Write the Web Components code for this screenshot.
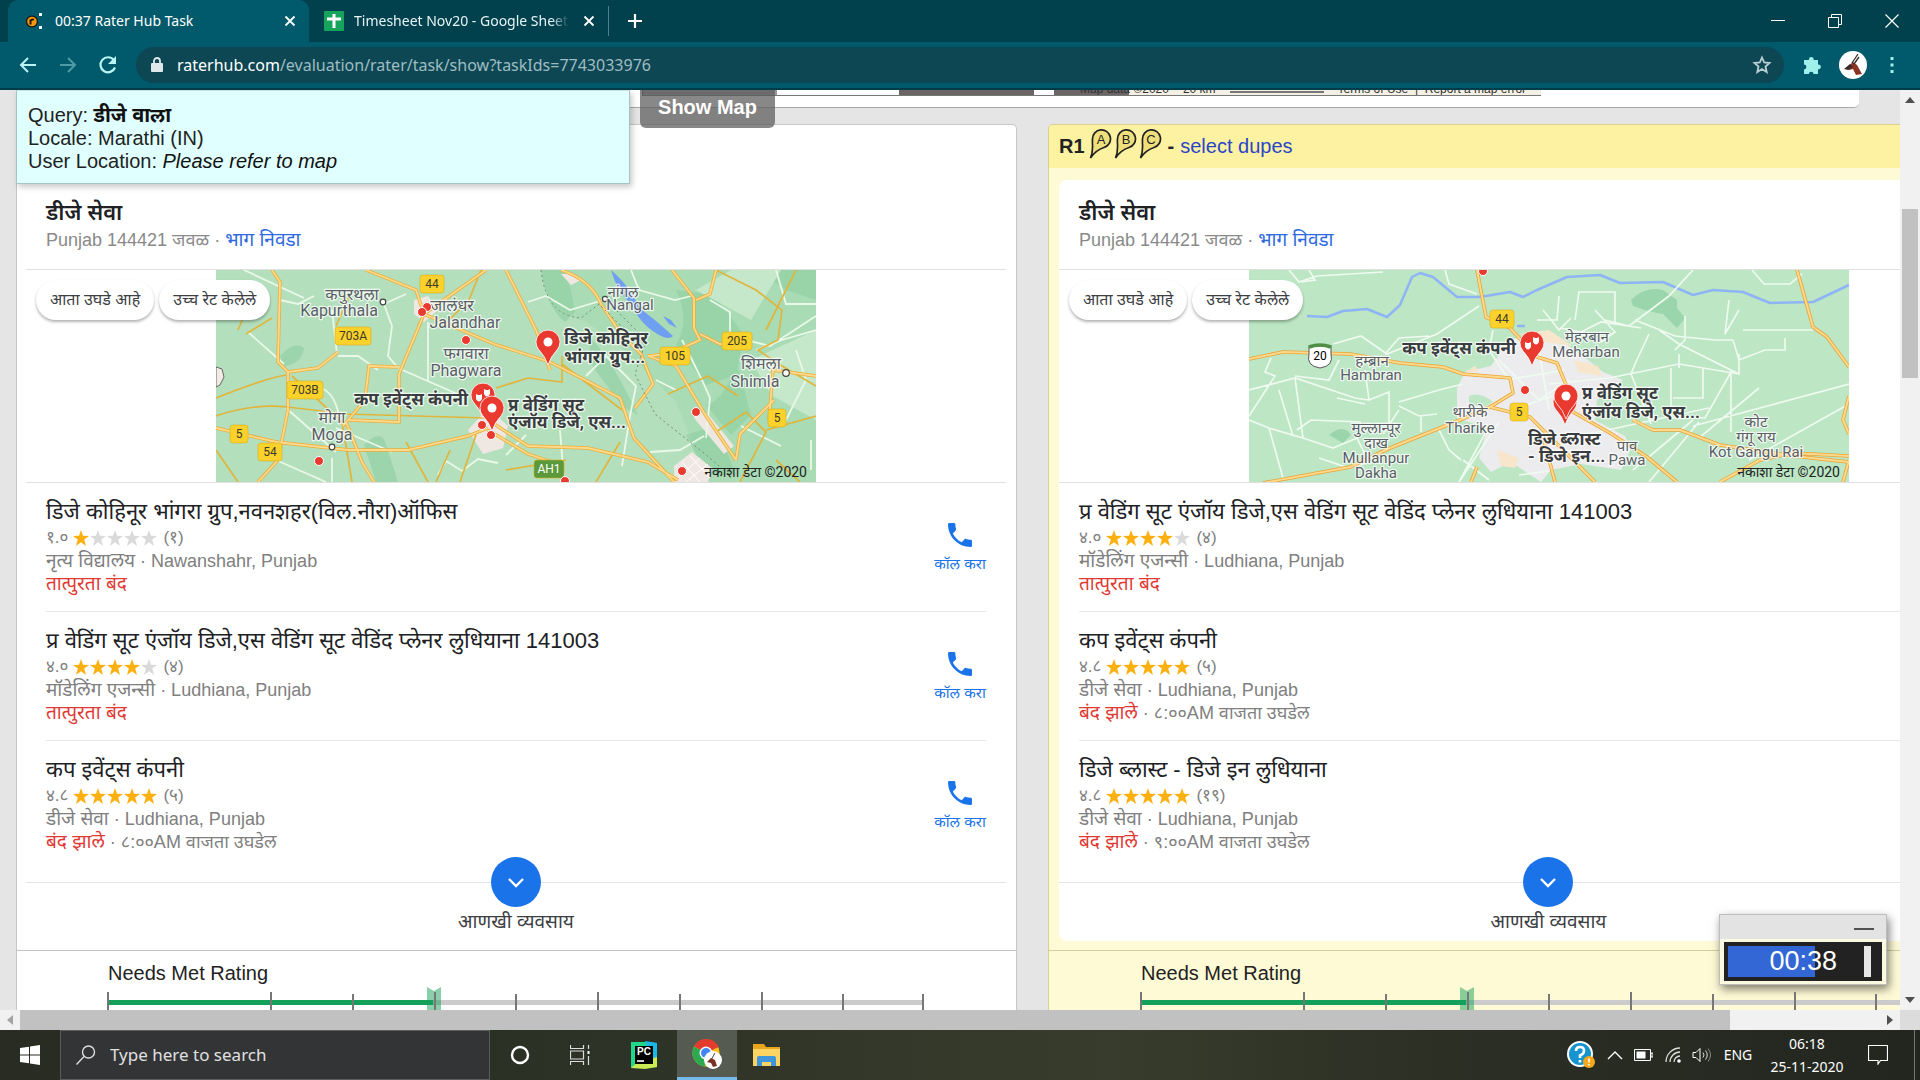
<!DOCTYPE html>
<html lang="mr">
<head>
<meta charset="utf-8">
<title>00:37 Rater Hub Task</title>
<style>
html, body { margin: 0; height: 100%; }
body { font-family: "Liberation Sans", "Noto Sans", "Noto Sans Devanagari", sans-serif; overflow: hidden; --ui: "Noto Sans", "Open Sans", sans-serif; }
</style>
</head>
<body>
<desktop-screen></desktop-screen>
<script>
const define = (name, render) => customElements.define(name, class extends HTMLElement {
  connectedCallback() {
    if (this.shadowRoot) return;
    this.attachShadow({ mode: "open" }).innerHTML =
      `<style>*{box-sizing:border-box}button{font:inherit;color:inherit;background:none;border:0;padding:0;margin:0;display:grid;place-items:center}a{text-decoration:none;color:inherit}svg{display:block}</style>` + render(this);
  }
});

define("desktop-screen", () => `
<style>:host{display:flex;flex-direction:column;height:100vh}page-viewport{flex:1;min-height:0}</style>
<tab-strip></tab-strip><tool-bar></tool-bar><page-viewport></page-viewport><task-bar></task-bar>`);

/* ---------- browser frame ---------- */
define("browser-tab", el => `
<style>
:host{display:flex;align-items:center;gap:11px;height:42px;width:301px;padding:0 9px 0 18px;color:#e6f3f5;font:14px/20px var(--ui)}
:host([active]){background:#015a6b;border-radius:10px 10px 0 0;color:#fff}
.t{flex:1;overflow:hidden;white-space:nowrap}
:host([fade]) .t{-webkit-mask-image:linear-gradient(90deg,#000 92%,transparent)}
button{width:20px;height:20px}
</style>
<slot name="icon"></slot><span class="t"><slot></slot></span>
<button aria-label="Close tab"><svg width="12" height="12" viewBox="0 0 12 12"><path d="M1.500 1.500l9 9M10.500 1.500l-9 9" stroke="#fff" stroke-width="1.800"/></svg></button>`);

define("tab-strip", () => `
<style>
:host{display:flex;height:42px;background:#01404d;padding-left:8px;align-items:center}
.sep{width:1px;height:30px;background:#4f7f89;margin:0 8px 0 0}
.sp{flex:1}.w{width:57px;height:36px}.new{width:36px;height:36px}
browser-tab+browser-tab{width:299px;padding-left:15px;gap:10px}
</style>
<browser-tab active>
<svg slot="icon" width="18" height="18" viewBox="0 0 18 18"><circle cx="6" cy="9.500" r="6" fill="#1a1208"/><circle cx="6" cy="9.500" r="4.800" fill="#f39a12"/><path d="M4.500 12.500V7.500M4.500 9q1-2 3.500-1.400" stroke="#2a1800" stroke-width="2" fill="none"/><path d="M13 1h3v3h-3zM13 14h3v3h-3z" fill="#f2fbff"/></svg>
00:37 Rater Hub Task</browser-tab>
<browser-tab fade>
<svg slot="icon" width="20" height="20" viewBox="0 0 20 20"><rect width="20" height="20" rx="1" fill="#16a35c"/><path d="M10 3v14M3 8h14" stroke="#fff" stroke-width="3"/></svg>
Timesheet Nov20 - Google Sheet</browser-tab>
<span class="sep"></span>
<button class="new" aria-label="New tab"><svg width="16" height="16" viewBox="0 0 16 16"><path d="M8 1v14M1 8h14" stroke="#fff" stroke-width="2.200"/></svg></button>
<span class="sp"></span>
<button class="w" aria-label="Minimise"><svg width="14" height="14" viewBox="0 0 14 14"><path d="M0 6.500h14" stroke="#fff"/></svg></button>
<button class="w" aria-label="Restore"><svg width="14" height="14" viewBox="0 0 14 14"><path d="M.5 3.500h10v10h-10zM3.500 3.500v-3h10v10h-3" fill="none" stroke="#fff"/></svg></button>
<button class="w" aria-label="Close"><svg width="14" height="14" viewBox="0 0 14 14"><path d="M.5.5l13 13M13.500.5l-13 13" stroke="#fff" stroke-width="1.200"/></svg></button>`);

define("tool-bar", () => `
<style>
:host{display:flex;align-items:center;height:48px;background:#015a6b;border-bottom:2px solid #003c4a;padding:0 10px 0 8px}
.n{width:40px;height:36px}
.box{flex:1;display:flex;align-items:center;height:36px;border-radius:18px;background:#0d4753;margin:0 8px;padding:0 12px 0 15px;gap:14px;color:#9fbcc2;font:16px/24px var(--ui)}
.url{flex:1}.url b{font-weight:400;color:#fff}
.av{width:42px;height:36px}.d{width:36px;height:36px}
</style>
<button class="n" aria-label="Back"><svg width="18" height="18" viewBox="0 0 18 18"><path d="M17 9H2M9 2L2 9l7 7" fill="none" stroke="#b9f5f2" stroke-width="2"/></svg></button>
<button class="n" aria-label="Forward"><svg width="18" height="18" viewBox="0 0 18 18"><path d="M1 9h15M9 2l7 7-7 7" fill="none" stroke="#4f9aa3" stroke-width="2"/></svg></button>
<button class="n" aria-label="Reload"><svg width="20" height="20" viewBox="0 0 20 20"><path d="M17 12.500A7.500 7.500 0 1 1 15.800 5" fill="none" stroke="#b9f5f2" stroke-width="2.200"/><path d="M18 1v8h-8z" fill="#b9f5f2"/></svg></button>
<div class="box">
<svg width="12" height="16" viewBox="0 0 12 16"><rect y="6" width="12" height="9" rx="1" fill="#dfe9eb"/><path d="M3 7V4a3 3 0 0 1 6 0v3" fill="none" stroke="#dfe9eb" stroke-width="1.800"/></svg>
<span class="url"><b>raterhub.com</b>/evaluation/rater/task/show?taskIds=7743033976</span>
<button aria-label="Bookmark"><svg width="20" height="20" viewBox="0 0 20 20"><path d="M10 2.500l2.200 5 5.300.5-4 3.500 1.200 5.500-4.700-2.900L5.300 17l1.200-5.500-4-3.500 5.300-.5z" fill="none" stroke="#b9cfd3" stroke-width="1.800"/></svg></button>
</div>
<button class="n" aria-label="Extensions"><svg width="20" height="20" viewBox="0 0 20 20"><path d="M2 5h5a2.400 2.400 0 1 1 4.600 0H16v4.500a2.400 2.400 0 1 1 0 4.700V19h-4.500a2.300 2.300 0 1 0-4.600 0H2v-4.600a2.400 2.400 0 0 0 0-4.800z" fill="#9ff0ea"/></svg></button>
<button class="av" aria-label="Profile"><svg width="28" height="28" viewBox="0 0 28 28"><circle cx="14" cy="14" r="14" fill="#fff"/><path d="M7 17l7-6 4 3 5 9-6 1-3-6-4 1z" fill="#8b3324"/><path d="M13 12L19 3M15 13L20 6" stroke="#33302e" stroke-width="1.300"/><path d="M5 18l6-5 3 3-5 3z" fill="#3c2a26"/></svg></button>
<button class="d" aria-label="Menu"><svg width="4" height="18" viewBox="0 0 4 18"><path d="M.5 1h3v3h-3zM.5 7.500h3v3h-3zM.5 14h3v3h-3z" fill="#9ff0ea"/></svg></button>`);

/* ---------- page area with scroll bars ---------- */
define("page-viewport", () => `
<style>
:host{display:grid;grid-template:minmax(0,1fr) 20px/minmax(0,1fr) 20px;background:#f1f1f1;overflow:hidden}
.view{position:relative;overflow:hidden;background:#e5e5e5;min-width:0}
.v{display:flex;flex-direction:column;align-items:center}
.v i{width:16px;height:169px;background:#c1c1c1;margin:99px 0 auto}
.h{display:flex;align-items:center}
.h i{height:20px;flex:0 1 90%;background:#c1c1c1}
.h button:last-child{margin-left:auto}
.c{background:#dcdcdc}
button{width:20px;height:20px}
.cols{display:grid;grid-template-columns:1fr 1fr;gap:31px;width:109%;padding:0 22px 0 16px;margin-top:16px}
query-box{position:absolute;left:16px;top:0}
show-map{position:absolute;left:640px;top:0}
rating-timer{position:absolute;right:13px;bottom:25px}
</style>
<div class="view">
<map-strip></map-strip>
<div class="cols">
<result-panel>
 <biz-map slot="map" kind="region"></biz-map>
 <biz-entry slot="entries" call score="१.०" stars="1" votes="१" category="नृत्य विद्यालय" place="Nawanshahr, Punjab" status="तात्पुरता बंद">डिजे कोहिनूर भांगरा ग्रुप,नवनशहर(विल.नौरा)ऑफिस</biz-entry>
 <biz-entry slot="entries" call score="४.०" stars="4" votes="४" category="मॉडेलिंग एजन्सी" place="Ludhiana, Punjab" status="तात्पुरता बंद">प्र वेडिंग सूट एंजॉय डिजे,एस वेडिंग सूट वेडिंद प्लेनर लुधियाना 141003</biz-entry>
 <biz-entry slot="entries" call last score="४.८" stars="5" votes="५" category="डीजे सेवा" place="Ludhiana, Punjab" status="बंद झाले" opens="८:००AM वाजता उघडेल">कप इवेंट्स कंपनी</biz-entry>
</result-panel>
<result-panel selected>
 <panel-heading slot="heading"></panel-heading>
 <biz-map slot="map" kind="city"></biz-map>
 <biz-entry slot="entries" score="४.०" stars="4" votes="४" category="मॉडेलिंग एजन्सी" place="Ludhiana, Punjab" status="तात्पुरता बंद">प्र वेडिंग सूट एंजॉय डिजे,एस वेडिंग सूट वेडिंद प्लेनर लुधियाना 141003</biz-entry>
 <biz-entry slot="entries" score="४.८" stars="5" votes="५" category="डीजे सेवा" place="Ludhiana, Punjab" status="बंद झाले" opens="८:००AM वाजता उघडेल">कप इवेंट्स कंपनी</biz-entry>
 <biz-entry slot="entries" last score="४.८" stars="5" votes="१९" category="डीजे सेवा" place="Ludhiana, Punjab" status="बंद झाले" opens="९:००AM वाजता उघडेल">डिजे ब्लास्ट - डिजे इन लुधियाना</biz-entry>
</result-panel>
</div>
<query-box></query-box><show-map></show-map><rating-timer></rating-timer>
</div>
<div class="v"><button aria-label="Scroll up"><svg width="10" height="6"><path d="M0 6h10L5 0z" fill="#505050"/></svg></button><i></i><button aria-label="Scroll down"><svg width="10" height="6"><path d="M0 0h10L5 6z" fill="#505050"/></svg></button></div>
<div class="h"><button aria-label="Scroll left"><svg width="6" height="10"><path d="M6 0v10L0 5z" fill="#a3a3a3"/></svg></button><i></i><button aria-label="Scroll right"><svg width="6" height="10"><path d="M0 0v10L6 5z" fill="#505050"/></svg></button></div>
<div class="c"></div>`);

define("map-strip", () => `
<style>
:host{display:flex;height:18px;background:#fff;border-bottom:1px solid #a9a9a9;border-radius:0 0 5px 5px;margin:0 41px 0 16px;padding:0 318px 0 626px;align-items:flex-start}
.m{flex:1;display:flex;align-items:flex-end;height:6px;overflow:hidden;border-bottom:1px solid #777;border-left:1px solid #555;color:#333;font-size:12px;line-height:12px;white-space:pre}
.m>span{flex:none;height:5px}
.a{width:134px;background:#999}.b{width:122px;background:#fff}.g{width:135px;background:#6b6566}.w{width:20px}
.t{flex:1;height:5px;background:linear-gradient(90deg,#6b6566 75px,#f4f1e4 75px);padding-left:26px;display:flex;align-items:flex-end;gap:14px}
.s{width:94px;border-top:2px solid #777;height:4px}
</style>
<div class="m"><span class="a"></span><span class="b"></span><span class="g"></span><span class="w"></span><div class="t"><span>Map data ©2020</span><span>20 km</span><span class="s"></span><span>Terms of Use  |  Report a map error</span></div></div>`);

define("query-box", () => `
<style>:host{display:block;width:614px;height:94px;background:#e0ffff;border:1px solid #a6c4c4;border-top-color:#cfe0e0;box-shadow:2px 3px 6px rgba(0,0,0,.22);padding:13px 11px;font-size:20px;line-height:23px;color:#222}
p{margin:0;height:23px;white-space:nowrap}b,em{color:#111}</style>
<p>Query: <b>डीजे वाला</b></p><p>Locale: Marathi (IN)</p><p>User Location: <em>Please refer to map</em></p>`);

define("show-map", () => `
<style>button{width:135px;height:38px;background:rgba(90,90,90,.72);border-radius:0 0 6px 6px;color:#fff;font-weight:700;font-size:20px;line-height:34px;align-items:start}</style>
<button>Show Map</button>`);

define("rating-timer", () => `
<style>
:host{display:block;width:168px;height:71px;border:1px solid #bdbdbd;background:rgba(250,248,225,.9);box-shadow:2px 4px 9px rgba(0,0,0,.5)}
.bar{height:24px;background:#e3e3e3;display:flex;justify-content:flex-end;align-items:center;padding:4px 12px 0 0}
.bar button{width:20px;height:14px}
.t{display:flex;justify-content:flex-end;align-items:center;gap:27px;margin:3px 4px 0;height:39px;border:4px solid #222;background:linear-gradient(90deg,#3367d6 58%,#222 58%);color:#fff;font-size:27px;line-height:31px;padding-right:7px}
.t i{width:7px;height:31px;background:#e6e6e6}
</style>
<div class="bar"><button aria-label="Minimise timer"><svg width="20" height="2"><path d="M0 1h20" stroke="#222" stroke-width="1.500"/></svg></button></div>
<div class="t"><span>00:38</span><i></i></div>`);

/* ---------- result panels ---------- */
const balloon = l => `<svg width="23" height="30" viewBox="0 0 23 30"><path d="M1.500 29C5 21 3 16 3.500 10A9 9 0 1 1 15 18.500Q7 21 1.500 29z" fill="#efe07c" stroke="#222" stroke-width="1.700"/><text x="12" y="15" font-size="13" text-anchor="middle" fill="#222">${l}</text></svg>`;
define("panel-heading", () => `
<style>:host{display:flex;align-items:center;height:43px;background:#fdf2a2;padding:0 10px 1px;font-size:20px;line-height:24px;font-weight:700;color:#222}
svg{margin:0 0 4px 2px;font-weight:400}a{font-weight:400;color:#2a45c8}span{margin:0 6px}svg:first-of-type{margin-left:4px}</style>
R1${balloon("A")}${balloon("B")}${balloon("C")}<span>-</span><a href="#dupes">select dupes</a>`);

define("result-panel", el => `
<style>
:host{display:block;background:#fff;border:1px solid #c6c6c6;border-bottom:0;border-radius:5px 5px 0 0;overflow:hidden;min-width:0;--edge:#c2c2c2}
:host([selected]){background:#fffad6;border-color:#d9cf90;--edge:#d3ce9f}
.head{height:55px}
.card{margin:0 10px 9px 9px;background:#fff;border-radius:8px;overflow:hidden}
:host([selected]) .card{margin-left:10px}
header{padding:19px 20px 16px;border-bottom:1px solid #e0e0e0}
h2{margin:0;font-size:22px;line-height:28px;font-weight:600;color:#202124}
p{margin:0;font-size:18px;line-height:26px;height:26px;color:#8a8a8a}
p a{color:#2f6ae0;font-size:19px}
.map{position:relative;display:flex;justify-content:center;border-bottom:1px solid #e0e0e0}
.chips{position:absolute;left:10px;top:10px;display:flex;gap:5px}
.chips button{height:40px;padding:0 14px;border-radius:20px;background:#fff;box-shadow:0 2px 3px rgba(0,0,0,.3);font-size:16px;line-height:24px;color:#3c4043}
.more{border-top:1px solid #e4e4e4;display:flex;justify-content:center;height:59px}
.more button{display:flex;flex-direction:column;align-items:center;gap:2px;margin-top:-26px;font-size:19px;line-height:26px;color:#3c4043;height:78px}
.rate{border-top:1px solid var(--edge);padding:10px 93px 0 91px}
:host([selected]) .rate{padding-right:92px;padding-left:92px}
</style>
<div class="head"><slot name="heading"></slot></div>
<div class="card">
<header><h2>डीजे सेवा</h2><p>Punjab 144421 जवळ · <a href="#area">भाग निवडा</a></p></header>
<div class="map"><slot name="map"></slot><div class="chips"><button>आता उघडे आहे</button><button>उच्च रेट केलेले</button></div></div>
<slot name="entries"></slot>
<div class="more"><button><svg width="50" height="50" viewBox="0 0 50 50"><circle cx="25" cy="25" r="25" fill="#1a73e8"/><path d="M18 22l7 7 7-7" fill="none" stroke="#fff" stroke-width="2.400"/></svg>आणखी व्यवसाय</button></div>
</div>
<div class="rate"><needs-scale></needs-scale></div>`);

define("biz-entry", el => {
  const a = n => el.getAttribute(n);
  const star = i => `<svg width="16" height="16" viewBox="0 0 16 16"><path d="M8 0l2 5.800 6 .1-4.800 3.700L13 16 8 12.300 3 16l1.800-6.400L0 5.900l6-.1z" fill="${i < +a("stars") ? "#fbb00f" : "#dadada"}"/></svg>`;
  return `
<style>
:host{display:flex;justify-content:space-between;margin:0 20px;height:129px;padding-top:14px;border-bottom:1px solid #e8e8e8}
:host([last]){height:141px;border:0}
h3{margin:0;font-size:22px;line-height:29px;height:29px;font-weight:400;color:#202124;white-space:nowrap}
p{margin:0;font-size:18px;line-height:23px;height:23px;color:#808080;white-space:nowrap}
.r{display:flex;align-items:center;font-size:17px}.s{display:flex;gap:1px;margin:0 6px 0 5px}
em,.d{font-style:normal;font-size:19px}em{color:#e03a34}
button{display:flex;flex-direction:column;align-items:center;gap:7px;width:52px;padding-top:26px;height:100px;font-size:15px;line-height:20px;color:#1a73e8;white-space:nowrap}
</style>
<div><h3><slot></slot></h3>
<p class="r">${a("score")}<span class="s">${[0,1,2,3,4].map(star).join("")}</span>(${a("votes")})</p>
<p><span class="d">${a("category")}</span> · ${a("place")}</p>
<p><em>${a("status")}</em>${a("opens") ? " · " + a("opens") : ""}</p></div>
${el.hasAttribute("call") ? `<button><svg width="24" height="24" viewBox="3 3 18 18"><path d="M6.620 10.790c1.440 2.830 3.760 5.140 6.590 6.590l2.200-2.200c.27-.27.67-.36 1.020-.24 1.120.37 2.330.57 3.570.57.55 0 1 .45 1 1V20c0 .55-.45 1-1 1-9.390 0-17-7.610-17-17 0-.55.45-1 1-1h3.500c.55 0 1 .45 1 1 0 1.250.2 2.450.57 3.570.11.35.03.74-.25 1.020z" fill="#1a73e8"/></svg>कॉल करा</button>` : ""}`;
});

define("needs-scale", () => `
<style>
:host{display:block}
label{display:block;font-size:20px;line-height:24px;color:#222;margin-bottom:2px}
.s{display:grid;height:40px}
.s>*{grid-area:1/1}
.ticks{display:grid;grid-template-columns:2fr repeat(8,1fr);height:30px;padding-top:5px;z-index:1;pointer-events:none;margin:0 -1px}
.ticks i{border-left:2px solid #777}
.ticks i.m{margin-top:2px}
.ticks i:last-child{border-right:2px solid #777}
input{-webkit-appearance:none;appearance:none;margin:0 -7px;height:30px;background:linear-gradient(90deg,transparent 7px,#12a05a 7px 40%,#cbcbcb 40% calc(100% - 7px),transparent calc(100% - 7px)) 0 13px/100% 5px no-repeat}
input::-webkit-slider-thumb{-webkit-appearance:none;width:14px;height:30px;background:rgba(20,160,90,.5);clip-path:polygon(0 0,50% 4px,100% 0,100% 100%,0 100%)}
</style>
<label for="n">Needs Met Rating</label>
<div class="s"><input id="n" type="range" min="0" max="10" value="4"><div class="ticks"><i></i><i></i><i class="m"></i><i></i><i class="m"></i><i></i><i class="m"></i><i></i><i class="m"></i></div></div>`);

/* ---------- maps ---------- */
const sh = (x, y, t, f = "#fbd22b", c = "#3c3a2a") => { const w = 12 + t.length * 6; return `<rect x="${x - w / 2}" y="${y - 9}" width="${w}" height="18" rx="3" fill="${f}" stroke="#d9ae1c" stroke-width=".6"/><text x="${x}" y="${y + 4}" class="s" fill="${c}">${t}</text>`; };
const dot = (x, y) => `<circle cx="${x}" cy="${y}" r="4.500" fill="#ea3a30" stroke="#fff"/>`;
const pin = (x, y, h = "#fff") => `<path d="M${x} ${y + 23}Q${x - 3} ${y + 14} ${x - 9} ${y + 8}A12 12 0 1 1 ${x + 9} ${y + 8}Q${x + 3} ${y + 14} ${x} ${y + 23}z" fill="#ea3a30" stroke="#fff" stroke-width=".8"/>` + (h ? `<circle cx="${x}" cy="${y}" r="4.500" fill="${h}"/>` : `<path d="M${x - 7} ${y - 1}l2 1h2l2-1v5q-3 5-6 0zM${x + 1} ${y - 6}l2 1h2l2-1v5q-3 5-6 0z" fill="#fff"/>`);
const tx = (x, y, t, c = "l") => `<text x="${x}" y="${y + 5}" class="${c}">${t}</text>`;
const rw = `M150 0l50 20 8 24 70 30 56 18 70 36 14 40 40 44M208 44l-25 60 0 48-50-2M208 44L270 0M56 0l8 12-2 80 10 10v38l-10 50-20 22M72 102l30-4 20-16M183 97l-30-1-4 34-22 26M0 158l60 14 72 8 60 0 60-14 20-8M272 150l40 26 60 2 60 14 30 18M130 152l16 40 12 20M290 0l30 60 14 40M272 160l40 24 30 10M345 0q30 10 40 34l20 30 20 20 12 30-18 24M432 86l28 10 30 50 30 44M456 0l22 28 0 30 6 12-32 14-20 2M484 64l20 10 20 2M500 0l-6 24-14 6M520 190l4-26 24-24 10-10M553 150l4-50 43 6`;
const region = `
<rect width="600" height="212" fill="#b4dfbd"/>
<path d="M325 0q5 40 45 52l30 20 60 60 20 50-20 30H600V0z" fill="#a9dcb5"/>
<g fill="#8fd0a2"><path d="M325 0h22l8 20 4 22-10 10q-18-14-24-52zM372 65q20 20 40 60l10 20-15-8-30-40zM460 20q15 30 0 55l30 40 30-10 8-40-30-40zM520 90q-10 40-30 45l25 30 20-20zM470 165l20 40h30l-20-50zM64 86q15-16 24-8-2 16-20 18zM148 175q18-18 22 0l12 37h-22zM540 0h60v30l-30-10z" opacity=".65"/><path d="M480 20l35-20h50l-30 50zM535 90l65-30v90l-45-25z" fill="#c5e8cb"/></g>
<path d="M395 0q14 12 22 26t14 18 26 22q-4 4-12 0-20-10-30-32-14-12-20-34zM447 46l8 4 6 8-8-4z" fill="#6f9ff0"/>
<g fill="#efe7e2"><path d="M198 30l14-4 10 14-14 12-10-8zM252 160l20-22 20 18-5 22-20 6zM478 140l14 4 26 32-10 8-30-36zM345 4h14l6 6-10 5z"/><path d="M458 196l18-14 20 16-4 14h-34z"/></g>
<path d="M466 192l18 20M474 186l20 22M462 208l22-20M470 212l22-18" stroke="#fff" fill="none"/>
<g fill="none" stroke="#eaf8e8" stroke-width="1.800"><path d="M28 0l60 28M98 26l-16 8-18-4M32 62l36 32M168 34l22-10M168 34l8 22-4 30 10 12 64 28M212 52v60M122 86l20 0 20 14M116 40l5 44M70 138l50 44M120 158l56 24M104 118q16 4 20 34M116 188v24M60 190l50 22M312 32l18-6 24 14 40-12M370 106l20-20 30 30-6 30-8 50M440 110l20 10M466 70l20 40 8 18-4 40M415 0l8 20 36 10 16-4M494 30l20 12 0 24 40 10 46-30M560 0l10 34 30 0M525 156l40 20M540 80l26-10 34-10M580 80l10 30-20 40M434 182l30-2 24-14M222 205l8-14 16 10 16-12 20 4M310 165l-20 20M344 160l4 50M595 170v30"/></g>
<g fill="none" stroke="#e0b53c" stroke-width="1.700"><path d="M0 128q50-20 70-23M0 146q40-14 80-8l50 6 140 4M136 20l-16 36M22 60l18-42M30 64l26-16M76 106l50 46 10 60M0 180l22 32M190 172l22 40M234 180l-14 32M260 165l-16 47M280 118l32-10 34 4 0-26M346 94l60 46M380 212l24-40M290 200l60-10M500 0l40 20 26 20-4 30-20 10 24 16 34 20M524 212l26-50-20-20-30 20M580 0l-30 60M550 160l50-14M560 190l24 22M452 124l40-18 30 20M265 0l-12 30-20 20"/></g>
<path fill="none" stroke="#e8ae3d" stroke-width="3.400" d="${rw}"/><path fill="none" stroke="#ffd98a" stroke-width="1.800" d="${rw}"/>
<path d="M325 0q5 46 40 48l18-14 20 20 26 20-10 30 20 40 50 40 14 12M390 30l40 40" fill="none" stroke="#7a8a80" stroke-dasharray="2 3"/>
<path d="M0 97l6 2 2 8-4 8-4 2z" fill="#f2ebe4" stroke="#666"/>
<g fill="#fff" stroke="#444" stroke-width="1.200"><circle cx="167" cy="32" r="2.800"/><circle cx="116" cy="177" r="2.800"/><circle cx="389" cy="29" r="2.600"/><circle cx="570" cy="103" r="3.300"/></g>
${sh(216,14,"44")}${sh(137,66,"703A")}${sh(89,120,"703B")}${sh(23,164,"5")}${sh(54,182,"54")}${sh(459,86,"105")}${sh(521,71,"205")}${sh(561,148,"5")}${sh(333,199,"AH1","#5a9a3c","#fff")}
${tx(136,25,"कपुरथला")}${tx(123,41,"Kapurthala")}${tx(236,36,"जालंधर")}${tx(249,53,"Jalandhar")}${tx(250,84,"फगवारा")}${tx(250,101,"Phagwara")}${tx(116,148,"मोगा")}${tx(116,165,"Moga")}${tx(407,22,"नांगल","l n")}${tx(414,35,"Nangal","l n")}${tx(545,94,"शिमला")}${tx(539,112,"Shimla")}
${dot(211,37)}${dot(206,42)}${dot(250,70)}${dot(103,191)}${dot(480,142)}${dot(466,201)}${dot(349,211)}
${pin(332,72)}${pin(267,125,"")}${pin(276,138)}${dot(266,155)}${dot(275,165)}
${tx(348,69,"डिजे कोहिनूर","b")}${tx(348,88,"भांगरा ग्रुप...","b")}${tx(292,136,"प्र वेडिंग सूट","b")}${tx(292,153,"एंजॉय डिजे, एस...","b")}${tx(252,130,"कप इवेंट्स कंपनी","b e")}
${tx(591,202,"नकाशा डेटा ©2020","c")}`;
const hw = `M0 89L34 82L101 84L151 93L194 97L214 104L261 108L264 123L241 137L211 150L141 178L101 197L14 213M228 0L237 47L261 58L288 87L308 93L318 117L324 142L361 163L398 187L428 212M241 137L281 147L311 177L346 212M293 163L306 212M384 150L404 160L431 160L471 175L504 180L544 186L600 192M548 0L564 57L578 67L600 97M471 212L511 190L544 183L600 186M600 126L594 150L600 164M228 197l-6 15M600 190l-6 22`;
const city = `
<rect width="600" height="212" fill="#bce6c4"/>
<path d="M382 30q14-14 32-10l14 10 0 8 8 10-8 10-14-14q-14-2-30-8zM80 165q14-12 22 0l-8 8z" fill="#9bd5ac"/>
<path d="M208 118l8-16 26-6 18-26 40-8 34 24 20 16 20 8-26 20-2 20 30 16 6 12-10 22-40-6-30 6-10 12-30-20-20 10-12-14 8-30-30-10z" fill="#ececee"/>
<path d="M325 90l24 6 4 10-24-4zM248 180l22 8-4 10-14-2zM270 64l30-4 24 16-30-4zM216 102l10-6 4 6z" fill="#f7e6cc"/>
<path d="M220 126q12-4 24 6l-10 6-14-4z" fill="#bce6c4"/>
<path d="M58 46L78 47L94 41L118 39L138 47L151 35L163 7L171 3L184 7L208 27L231 27L261 22L274 27L288 20L318 7L351 5L371 13L414 12L444 25L464 20L494 22L521 33L564 32L600 15M268 56h8" fill="none" stroke="#8fb4f6" stroke-width="2.500" stroke-linejoin="round"/>
<g fill="none" stroke="#effaf0" stroke-width="1.700"><path d="M40 0l10 12 18-6 66-4M52 12l14-2-6-10M196 0l4 14 28 10M84 74l28-8 26 18 50-20 42-28M136 84l14-16 30-2M22 88l-6 14 10 4-26 40M0 120l46-12 60 20 14 2-4-30M46 108l8 60-34-10-20-8M48 160l14-10 50 2M90 90l-10 20-34-4M120 130l20-8 0 40M150 132l40-12 24-6M150 136l20 10 18-2M88 128l28 6M54 168l30 10 24-10 12 24-20 6-30-10M30 120l14 46M20 158l14 50M150 140l-16 24M172 146v16M190 160l10 20 12 10M210 212l30-56M294 40l16 20 12-12-10 10 20 4 20-10 40 6M326 50l4-28 36 0 0 30M310 26l-2 24-20 0M346 40l20 22-14 10M356 50l24 6 40-30 24-26M386 50l40 16 40 4 18 0M410 60l20 14 60 30 0-20M436 46l0 24-10 10M484 70l6 20 26-10 20 0 0-12M494 60h70M480 30l-4 34 14-24M400 64l-14 30-4 10 20 50M300 114l60-6 70-14 60 10M430 84l0 14M422 98l0 50 34 0 26-46 0 60M424 128l30 0 0-30M340 164l120-26M444 156l156-42M450 168l60-50M384 200l60-50M500 190l100-56M400 212l50-60M503 0l12 14 26 0 12-10M210 212l40-60M214 190l26 20M270 205l30-4M250 90l40 40 30-20M256 110l60-10M262 140l60-20M290 80l10 60M244 60l-4 20 20 30"/></g>
<path fill="none" stroke="#e8a33a" stroke-width="3.600" stroke-linejoin="round" d="${hw}"/><path fill="none" stroke="#ffd98a" stroke-width="2" stroke-linejoin="round" d="${hw}"/>
<path d="M60 76h22v8q3 12-11 14-14-2-11-14z" fill="#fff" stroke="#555"/><path d="M60 77q11-4 22 0" stroke="#4f8f45" stroke-width="3.500" fill="none"/>${tx(71,85,"20","s")}
${sh(253,49,"44")}${sh(270,142,"5")}
${tx(123,91,"हम्ब्रान","l n")}${tx(122,105,"Hambran","l n")}${tx(127,158,"मुल्लान्पूर","l n")}${tx(127,173,"दाख","l n")}${tx(127,188,"Mullanpur","l n")}${tx(127,203,"Dakha","l n")}${tx(221,142,"थारीके","l n")}${tx(221,158,"Tharike","l n")}${tx(338,67,"मेहरबान","l n")}${tx(337,82,"Meharban","l n")}${tx(507,152,"कोट","l n")}${tx(507,167,"गंगू राय","l n")}${tx(507,182,"Kot Gangu Rai","l n")}${tx(378,176,"पाव","l n")}${tx(378,190,"Pawa","l n")}
${dot(276,120)}${dot(234,1)}${pin(283,73,"")}${pin(316,132)}${pin(317,126)}
${tx(333,124,"प्र वेडिंग सूट","b")}${tx(333,143,"एंजॉय डिजे, एस...","b")}${tx(267,79,"कप इवेंट्स कंपनी","b e")}${tx(279,170,"डिजे ब्लास्ट","b")}${tx(279,187,"- डिजे इन...","b")}
${tx(591,202,"नकाशा डेटा ©2020","c")}`;
define("biz-map", el => `
<style>:host{display:block}
text{font-family:Roboto,"Noto Sans","Noto Sans Devanagari",sans-serif;paint-order:stroke;stroke:#ffffffc0;stroke-width:2.500px;stroke-linejoin:round}
.l{font-size:16px;fill:#5a5f66;text-anchor:middle}.l.n{font-size:15px}
.b{font-size:17px;font-weight:700;fill:#3a3d40}.e{text-anchor:end}
.s{font-size:12px;text-anchor:middle;stroke:none;font-weight:400}
.c{font-size:14px;text-anchor:end;fill:#222;stroke:none}
</style>
<svg width="600" height="212" viewBox="0 0 600 212" role="img" aria-label="नकाशा">${el.getAttribute("kind") === "region" ? region : city}</svg>`);

/* ---------- task bar ---------- */
define("task-bar", () => `
<style>
:host{display:flex;align-items:stretch;height:50px;background:linear-gradient(90deg,#282c22 0,#2b3025 25%,#373c2c 58%,#2c2f24 75%,#23261f 100%);color:#fff;font-family:var(--ui)}
.b{width:60px}.q{display:flex;align-items:center;width:430px;background:#333436;border:1px solid #5a5b5c;padding:0 15px;gap:14px}
input{flex:1;min-width:0;background:none;border:0;padding:0;outline:0;color:#e8e8e8;font:17px/24px var(--ui)}
input::placeholder{color:#e0e0e0;opacity:1}
.on{background:#565b51;border-bottom:3px solid #76b9ed}
.sp{flex:1}.t{width:29px}.help{width:38px}.e{font-size:14px;line-height:20px;width:44px}
.clk{width:94px;display:flex;flex-direction:column;justify-content:center;text-align:center;font-size:14px;line-height:23px}
.n{width:48px}.end{width:6px;border-left:1px solid #777;margin-left:12px}
.cort{width:60px}.tv{width:60px}.pc{width:67px}
</style>
<button class="b" aria-label="Start"><svg width="20" height="20" viewBox="0 0 20 20"><path d="M0 3l9-1.300V9.500H0zM10 1.500L20 0v9.500H10zM0 10.500h9v7.800L0 17zM10 10.500h10V20l-10-1.500z" fill="#fff"/></svg></button>
<div class="q"><svg width="20" height="20" viewBox="0 0 20 20"><circle cx="12.500" cy="7" r="6" fill="none" stroke="#ddd" stroke-width="1.400"/><path d="M8 11.500L.5 19.500" stroke="#ddd" stroke-width="1.400"/></svg><input type="text" aria-label="Search" placeholder="Type here to search"></div>
<button class="cort" aria-label="Cortana"><svg width="20" height="20"><circle cx="10" cy="10" r="8" fill="none" stroke="#fff" stroke-width="2.400"/></svg></button>
<button class="tv" aria-label="Task view"><svg width="20" height="20" viewBox="0 0 20 20"><path d="M.5 0v3.500h13V0M.5 20v-3.500h13V20M.5 6h13v8H.5zM18.500 0v4M18.500 11v9" fill="none" stroke="#ddd" stroke-width="1.200"/><path d="M17.500 6h2v3h-2z" fill="#fff"/></svg></button>
<button class="pc" aria-label="PyCharm"><svg width="28" height="28" viewBox="0 0 28 28"><path d="M1 1h14l12 1v24l-12 1H1z" fill="#21d789"/><path d="M27 6v20l-12 2-14-1 10-9z" fill="#c9ea52"/><path d="M15 0l12 2v14l-6 2z" fill="#18b8e8"/><rect x="5" y="5" width="18" height="18" fill="#000"/><text x="7" y="14" font-size="10" font-weight="700" fill="#fff" font-family="Liberation Sans">PC</text><path d="M7 20h7" stroke="#fff" stroke-width="1.600"/></svg></button>
<button class="b on" aria-label="Chrome"><svg width="32" height="32" viewBox="0 0 32 32"><circle cx="15" cy="15" r="13.500" fill="#fbc116"/><path d="M15 15L3 8.500A13.500 13.500 0 0 1 27.500 9z" fill="#e33b2e"/><path d="M15 15L3 8.500A13.500 13.500 0 0 0 14 28.500z" fill="#2da94f"/><circle cx="15" cy="15" r="6.500" fill="#fff"/><circle cx="15" cy="15" r="5" fill="#4285f4"/><circle cx="22" cy="22" r="9" fill="#fff"/><path d="M20 22l4-7" stroke="#444"/><path d="M16 24l4-4 4 2 2 6-4 1-2-4z" fill="#7b3024"/></svg></button>
<button class="b" aria-label="File Explorer"><svg width="28" height="24" viewBox="0 0 28 24"><path d="M0 1h11l2 3h14v4H0z" fill="#e8a51d"/><path d="M0 6h27v17H0z" fill="#fcd462"/><path d="M4 23v-8q0-2 2-2h15q2 0 2 2v8h-5v-4H9v4z" fill="#3e97dd"/></svg></button>
<span class="sp"></span>
<button class="help" aria-label="Help"><svg width="28" height="28" viewBox="0 0 28 28"><circle cx="13" cy="13" r="13" fill="#fff"/><circle cx="13" cy="13" r="11" fill="#1694cf"/><path d="M9 10q0-4 4-4t4 3.500-4 5V17M13 19v2.500" fill="none" stroke="#fff" stroke-width="2.600"/><circle cx="22" cy="21" r="6" fill="#f5a81c"/><path d="M22 17.500v4M22 23v1.500" stroke="#fff" stroke-width="1.600"/></svg></button>
<button class="t" aria-label="Show hidden icons"><svg width="16" height="10"><path d="M1 9l7-7 7 7" fill="none" stroke="#fff" stroke-width="1.400"/></svg></button>
<button class="t" aria-label="Battery"><svg width="19" height="12" viewBox="0 0 19 12"><path d="M.5.5h16v11H.5zM17 4h2v4h-2z" fill="none" stroke="#fff"/><path d="M2.500 2.500h9v7h-9z" fill="#fff"/></svg></button>
<button class="t" aria-label="Wi-Fi"><svg width="16" height="16" viewBox="0 0 16 16"><g fill="none" stroke="#ddd" stroke-width="1.300"><path d="M1 15A14 14 0 0 1 15 1M5 15A10 10 0 0 1 15 5M9 15a6 6 0 0 1 6-6"/></g><circle cx="14" cy="14" r="1.800" fill="#fff"/></svg></button>
<button class="t" aria-label="Volume"><svg width="20" height="16" viewBox="0 0 20 16"><path d="M1 5.500h3l4-4v13l-4-4H1z" fill="none" stroke="#fff"/><path d="M11 5.500q2 2.500 0 5M13.500 3.500q3.500 4.500 0 9" fill="none" stroke="#ddd"/><path d="M16 1.500q5 6.500 0 13" fill="none" stroke="#888"/></svg></button>
<button class="e">ENG</button>
<button class="clk"><span>06:18</span><span>25-11-2020</span></button>
<button class="n" aria-label="Notifications"><svg width="20" height="20" viewBox="0 0 20 20"><path d="M.5.5h19v15h-7L10 19l0-3.500H.5z" fill="none" stroke="#fff" stroke-width="1.200"/></svg></button>
<span class="end"></span>`);
</script>
</body>
</html>
